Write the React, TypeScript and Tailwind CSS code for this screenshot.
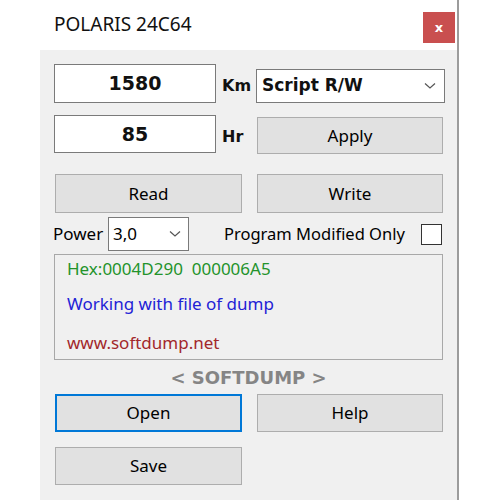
import React from "react";

const ui = { fontFamily: '"Noto Sans", "Open Sans", sans-serif' };
const bold = { fontFamily: '"DejaVu Sans", Verdana, sans-serif', fontWeight: 700 };

function Chevron() {
  return (
    <svg width="12" height="8" viewBox="0 0 12 8" className="shrink-0">
      <polyline points="1,1.5 6,6 11,1.5" fill="none" stroke="#555" strokeWidth="1.2" />
    </svg>
  );
}

function Btn({ label, w, h, focused }: { label: string; w: number; h: number; focused?: boolean }) {
  return (
    <div
      className={
        focused
          ? "flex items-center justify-center bg-[#e1e1e1] border-2 border-[#0078d7] text-[17px] text-black"
          : "flex items-center justify-center bg-[#e1e1e1] border border-[#adadad] text-[17px] text-black"
      }
      style={{ ...ui, width: w, height: h }}
    >
      {label}
    </div>
  );
}

export default function App() {
  return (
    <div className="w-[500px] h-[500px] bg-white overflow-hidden flex">
      <div className="ml-[40px] w-[419px] h-full flex flex-col border-r-2 border-[#9c9c9c]">
        {/* title bar */}
        <div className="h-[50px] flex justify-between bg-white">
          <div className="pl-[14px] pt-[10px] text-[19px] text-[#111]" style={ui}>
            POLARIS 24C64
          </div>
          <div className="mt-[12px] mr-[2px] w-[32px] h-[31px] bg-[#c94f4f] flex items-center justify-center">
            <span className="text-white text-[13px] leading-none" style={bold}>
              x
            </span>
          </div>
        </div>

        {/* dialog body */}
        <div className="flex-1 bg-[#f0f0f0] pl-[14px] flex flex-col">
          {/* Km row */}
          <div className="mt-[14px] flex items-start">
            <div className="w-[162px] h-[39px] bg-white border border-[#7a7a7a] flex items-center justify-center text-[19px] text-[#111]" style={bold}>
              1580
            </div>
            <div className="w-[40px] h-[39px] pl-[6px] pt-[5px] flex items-center text-[16px] text-[#111]" style={bold}>
              Km
            </div>
            <div className="mt-[5px] w-[189px] h-[34px] bg-white border border-[#7a7a7a] flex items-center justify-between pl-[5px] pr-[8px]">
              <span className="text-[17px] text-[#111]" style={bold}>
                Script R/W
              </span>
              <Chevron />
            </div>
          </div>

          {/* Hr row */}
          <div className="mt-[12px] flex items-start">
            <div className="w-[162px] h-[38px] bg-white border border-[#7a7a7a] flex items-center justify-center text-[19px] text-[#111]" style={bold}>
              85
            </div>
            <div className="w-[41px] h-[38px] pl-[6px] pt-[6px] flex items-center text-[16px] text-[#111]" style={bold}>
              Hr
            </div>
            <div className="mt-[2px]">
              <Btn label="Apply" w={186} h={37} />
            </div>
          </div>

          {/* Read / Write */}
          <div className="mt-[20px] flex pl-[1px] gap-[15px]">
            <Btn label="Read" w={187} h={39} />
            <Btn label="Write" w={186} h={39} />
          </div>

          {/* Power / Program modified only */}
          <div className="mt-[4px] h-[34px] flex items-center">
            <span className="-ml-[1px] w-[55px] text-[17px] text-black" style={ui}>
              Power
            </span>
            <div className="w-[81px] h-[34px] bg-white border border-[#7a7a7a] flex items-center justify-between pl-[4px] pr-[7px]">
              <span className="text-[17px] text-black" style={ui}>
                3,0
              </span>
              <Chevron />
            </div>
            <span className="ml-[35px] text-[16.5px] text-black" style={ui}>
              Program Modified Only
            </span>
            <div className="ml-[16px] w-[21px] h-[21px] bg-white border border-[#333]" />
          </div>

          {/* status group */}
          <div className="mt-[3px] w-[389px] h-[106px] border border-[#a8a8a8] pl-[12px] flex flex-col text-[17px]" style={ui}>
            <div className="mt-[2px] h-[24px] flex items-center text-[#23932b] whitespace-pre">Hex:0004D290  000006A5</div>
            <div className="mt-[11px] h-[24px] flex items-center text-[#2222d6]">Working with file of dump</div>
            <div className="mt-[15px] h-[24px] flex items-center text-[#a2272b]">www.softdump.net</div>
          </div>

          {/* brand line */}
          <div className="w-[389px] h-[34px] flex items-center justify-center text-[18px] text-[#858585] whitespace-pre" style={bold}>
            {"< SOFTDUMP >"}
          </div>

          {/* Open / Help */}
          <div className="flex pl-[1px] gap-[15px]">
            <Btn label="Open" w={187} h={38} focused />
            <Btn label="Help" w={186} h={38} />
          </div>

          {/* Save */}
          <div className="mt-[15px] pl-[1px]">
            <Btn label="Save" w={187} h={38} />
          </div>
        </div>
      </div>
    </div>
  );
}
